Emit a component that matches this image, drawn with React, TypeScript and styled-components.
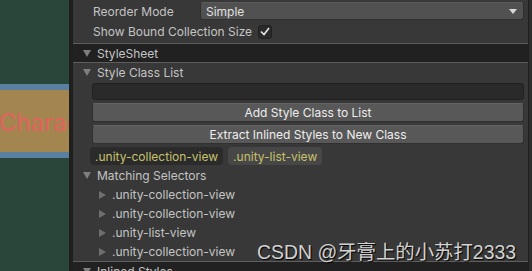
import styled, { createGlobalStyle } from 'styled-components';

const GlobalStyle = createGlobalStyle`
  html, body {
    margin: 0;
    padding: 0;
    background: #383838;
  }
`;

const Root = styled.div`
  position: relative;
  display: flex;
  width: 532px;
  height: 271px;
  overflow: hidden;
  background: #383838;
  font-family: Inter, 'Noto Sans', sans-serif;
  font-size: 12px;
  color: #c4c4c4;
`;

const Canvas = styled.div`
  flex: none;
  width: 69px;
  display: flex;
  flex-direction: column;
  background: #28463a;
  overflow: hidden;
`;

const CanvasGap = styled.div<{ $h: number }>`
  flex: none;
  height: ${(p) => p.$h}px;
`;

const Band = styled.div`
  flex: none;
  height: 6px;
  background: #5b7fa1;
`;

const LabelBox = styled.div`
  flex: none;
  height: 62px;
  display: flex;
  align-items: center;
  background: #a3854f;
  color: #e4625e;
  font-size: 24px;
  white-space: nowrap;
  text-indent: -1px;
  padding-top: 2px;
  box-sizing: border-box;
  overflow: hidden;
`;

const Splitter = styled.div`
  flex: none;
  width: 4px;
  background: #1f1f1f;
`;

const Inspector = styled.div`
  flex: 1;
  display: flex;
  flex-direction: column;
  padding-top: 2px;
  min-width: 0;
  overflow: hidden;

  & > * {
    flex: none;
  }
`;

const RightEdge = styled.div`
  flex: none;
  width: 3px;
  background: #2e2e2e;
  border-left: 1px solid #1e1e1e;
`;

const FieldRow = styled.div<{ $h: number }>`
  display: flex;
  align-items: center;
  height: ${(p) => p.$h}px;
  padding: 0 4px 0 20px;
`;

const Label = styled.div<{ $w?: number }>`
  flex: none;
  width: ${(p) => (p.$w ? `${p.$w}px` : 'auto')};
  margin-right: ${(p) => (p.$w ? 0 : 6)}px;
  white-space: nowrap;
`;

const Dropdown = styled.div`
  flex: 1;
  height: 18px;
  box-sizing: border-box;
  display: flex;
  align-items: center;
  justify-content: space-between;
  padding: 0 6px 0 5px;
  background: #515151;
  border: 1px solid #303030;
  border-top-color: #5a5a5a;
  border-radius: 3px;
  color: #e0e0e0;
`;

const Checkbox = styled.div`
  flex: none;
  width: 14px;
  height: 14px;
  box-sizing: border-box;
  display: flex;
  align-items: center;
  justify-content: center;
  background: #2a2a2a;
  border: 1px solid #212121;
  border-radius: 3px;
`;

const Header = styled.div`
  display: flex;
  align-items: center;
  height: 18px;
  padding-left: 10px;
  background: #212121;
  border-top: 1px solid #5e5e5e;
  border-bottom: 1px solid #5e5e5e;
`;

const Foldout = styled.div<{ $indent: number; $h: number }>`
  display: flex;
  align-items: center;
  height: ${(p) => p.$h}px;
  padding-left: ${(p) => p.$indent}px;
  white-space: nowrap;
`;

const Arrow = styled.svg`
  flex: none;
  margin-right: 6px;
`;

const Stack = styled.div`
  display: flex;
  flex-direction: column;
  gap: 3px;
  padding: 2px 4px 0 19px;

  & > * {
    flex: none;
  }
`;

const TextField = styled.div`
  height: 17px;
  box-sizing: border-box;
  background: #2a2a2a;
  border: 1px solid #212121;
  border-radius: 3px;
`;

const Button = styled.div`
  height: 19px;
  box-sizing: border-box;
  display: flex;
  align-items: center;
  justify-content: center;
  background: #585858;
  border: 1px solid #303030;
  border-top-color: #646464;
  border-radius: 3px;
  color: #eeeeee;
`;

const TagRow = styled.div`
  display: flex;
  gap: 5px;
  margin: 0 0 1px -2px;
`;

const Tag = styled.div<{ $selected?: boolean }>`
  height: 18px;
  display: flex;
  align-items: center;
  padding: 0 5px;
  border-radius: 4px;
  background: ${(p) => (p.$selected ? '#2b2b2b' : '#474747')};
  color: #c8c26c;
`;

const Watermark = styled.div`
  position: absolute;
  right: 16px;
  bottom: 6px;
  font-family: 'Liberation Sans', 'Noto Sans CJK SC', sans-serif;
  font-size: 19.4px;
  color: #d2d2d2;
  text-shadow: 1px 1px 1px #000;
  white-space: nowrap;
`;

const Down = () => (
  <Arrow width="8" height="7" viewBox="0 0 8 7">
    <polygon points="0,0 8,0 4,7" fill="#7f7f7f" />
  </Arrow>
);

const Right = () => (
  <Arrow width="7" height="8" viewBox="0 0 7 8">
    <polygon points="0,0 7,4 0,8" fill="#6f6f6f" />
  </Arrow>
);

const selectors = [
  '.unity-collection-view',
  '.unity-collection-view',
  '.unity-list-view',
  '.unity-collection-view',
];

export default function App() {
  return (
    <Root>
      <GlobalStyle />
      <Canvas>
        <CanvasGap $h={84} />
        <Band />
        <LabelBox>Character</LabelBox>
        <Band />
      </Canvas>
      <Splitter />
      <Inspector>
        <FieldRow $h={18}>
          <Label $w={107}>Reorder Mode</Label>
          <Dropdown>
            Simple
            <svg width="8" height="5" viewBox="0 0 8 5">
              <polygon points="0,0 8,0 4,5" fill="#d8d8d8" />
            </svg>
          </Dropdown>
        </FieldRow>
        <FieldRow $h={23}>
          <Label>Show Bound Collection Size</Label>
          <Checkbox>
            <svg width="10" height="9" viewBox="0 0 10 9">
              <polyline points="1,4.5 4,7.5 9,1" fill="none" stroke="#e8e8e8" strokeWidth="1.6" />
            </svg>
          </Checkbox>
        </FieldRow>
        <Header>
          <Down />
          StyleSheet
        </Header>
        <Foldout $indent={10} $h={18}>
          <Down />
          Style Class List
        </Foldout>
        <Stack>
          <TextField />
          <Button>Add Style Class to List</Button>
          <Button>Extract Inlined Styles to New Class</Button>
          <TagRow>
            <Tag $selected>.unity-collection-view</Tag>
            <Tag>.unity-list-view</Tag>
          </TagRow>
        </Stack>
        <Foldout $indent={10} $h={19}>
          <Down />
          Matching Selectors
        </Foldout>
        {selectors.map((s, i) => (
          <Foldout key={i} $indent={26} $h={19}>
            <Right />
            {s}
          </Foldout>
        ))}
        <Header>
          <Down />
          Inlined Styles
        </Header>
      </Inspector>
      <RightEdge />
      <Watermark>CSDN @牙膏上的小苏打2333</Watermark>
    </Root>
  );
}
